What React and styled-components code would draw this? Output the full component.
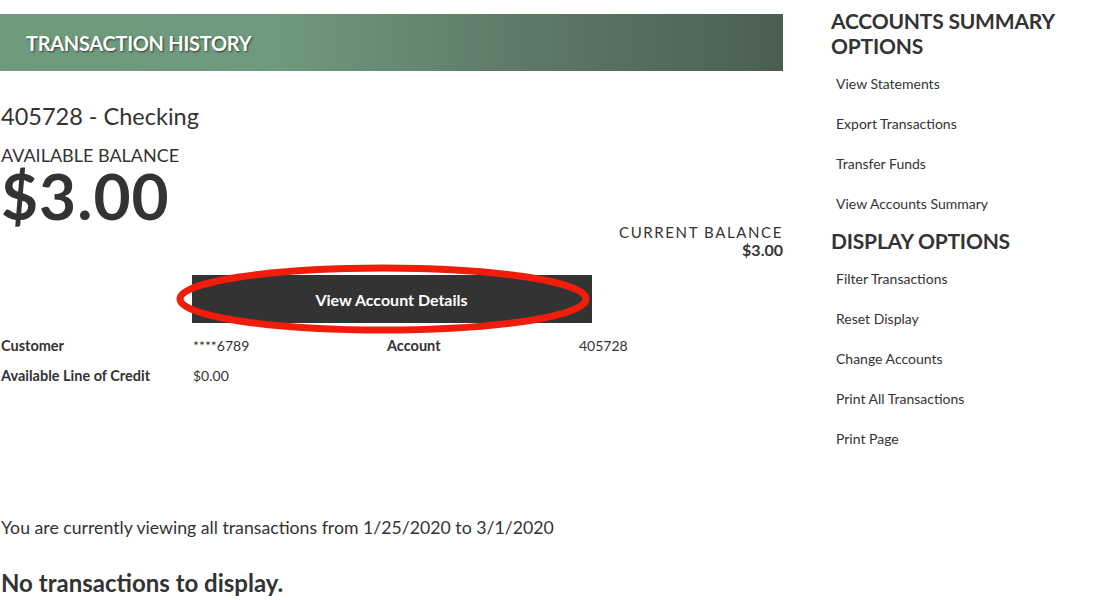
import React from "react";
import styled, {createGlobalStyle} from "styled-components";

const Global = createGlobalStyle`
   body {
      margin: 0;
      font-family: Lato, "Open Sans", sans-serif;
      color: #333;
      background: #fff;
   }
`;
const Page = styled.div`
   width: 1100px;
   display: flex;
   align-items: flex-start;
   gap: 48px;
`;
const Main = styled.main`
   width: 783px;
   padding-top: 14px;
`;
const Banner = styled.div`
   height: 57px;
   display: flex;
   align-items: center;
   padding-left: 26px;
   background: linear-gradient(90deg, #6e9b7c 0%, #6f9a7e 35%, #5f7b67 65%, #4b5f51 100%);
`;
const BannerTitle = styled.h1`
   margin: 0;
   font-size: 20px;
   font-weight: 700;
   color: #fff;
   letter-spacing: -0.3px;
   text-shadow: 1px 1px 2px rgba(0, 0, 0, 0.6);
`;
const AccountName = styled.h2`
   margin: 30px 0 0 1px;
   font-size: 23.5px;
   font-weight: 400;
   line-height: 30px;
`;
const Label = styled.div`
   margin-top: 15px;
   font-size: 18px;
   line-height: 18px;
   padding-left: 1px;
`;
const BigAmount = styled.div`
   font-size: 64px;
   font-weight: 700;
   line-height: 64px;
   letter-spacing: 1px;
   padding-left: 1px;
`;
const Current = styled.div`
   text-align: right;
   margin-top: -5px;
`;
const CurrentLabel = styled.div`
   font-size: 15px;
   letter-spacing: 1.6px;
   line-height: 18px;
`;
const CurrentValue = styled.div`
   font-size: 16px;
   font-weight: 700;
   line-height: 18px;
`;
const ButtonRow = styled.div`
   display: flex;
   justify-content: center;
   margin-top: 16px;
`;
const ButtonWrap = styled.div`
   position: relative;
`;
const DetailsButton = styled.button`
   width: 400px;
   height: 48px;
   border: none;
   background: #333;
   color: #fff;
   font-family: Lato, sans-serif;
   font-size: 16px;
   font-weight: 700;
   cursor: pointer;
`;
const Circle = styled.svg`
   position: absolute;
   left: -18px;
   top: -12px;
   pointer-events: none;
`;
const Details = styled.div`
   display: grid;
   grid-template-columns: 193px 193px 193px 193px;
   row-gap: 12px;
   margin-top: 14px;
   font-size: 14px;
   line-height: 18px;
`;
const Key = styled.div`
   font-weight: 700;
   font-size: 14.5px;
   padding-left: 1px;
`;
const Value = styled.div``;
const Viewing = styled.p`
   margin: 133px 0 0;
   font-size: 17.7px;
   line-height: 20px;
   padding-left: 1px;
`;
const Empty = styled.h3`
   margin: 32px 0 0;
   font-size: 24px;
   font-weight: 700;
   line-height: 26px;
   padding-left: 1px;
`;
const Side = styled.aside`
   width: 260px;
   padding-top: 8px;
`;
const SideTitle = styled.h2`
   margin: 0 0 6px;
   font-size: 21px;
   font-weight: 700;
   line-height: 25px;
   letter-spacing: -0.2px;
`;
const SideList = styled.ul`
   list-style: none;
   margin: 0 0 4px;
   padding: 0 0 0 5px;
`;
const SideItem = styled.li`
   font-size: 14px;
   line-height: 40px;
   cursor: pointer;
`;

const summary = ["View Statements", "Export Transactions", "Transfer Funds", "View Accounts Summary"];
const display = ["Filter Transactions", "Reset Display", "Change Accounts", "Print All Transactions", "Print Page"];

const App = () => {
   return (
      <>
         <Global />
         <Page>
            <Main>
               <Banner>
                  <BannerTitle>TRANSACTION HISTORY</BannerTitle>
               </Banner>
               <AccountName>405728 - Checking</AccountName>
               <Label>AVAILABLE BALANCE</Label>
               <BigAmount>$3.00</BigAmount>
               <Current>
                  <CurrentLabel>CURRENT BALANCE</CurrentLabel>
                  <CurrentValue>$3.00</CurrentValue>
               </Current>
               <ButtonRow>
                  <ButtonWrap>
                     <DetailsButton>View Account Details</DetailsButton>
                     <Circle width="420" height="72" viewBox="0 0 420 72">
                        <ellipse cx="209" cy="36" rx="203" ry="31" fill="none" stroke="#f01d0a" strokeWidth="7" />
                     </Circle>
                  </ButtonWrap>
               </ButtonRow>
               <Details>
                  <Key>Customer</Key>
                  <Value>****6789</Value>
                  <Key>Account</Key>
                  <Value>405728</Value>
                  <Key>Available Line of Credit</Key>
                  <Value>$0.00</Value>
               </Details>
               <Viewing>You are currently viewing all transactions from 1/25/2020 to 3/1/2020</Viewing>
               <Empty>No transactions to display.</Empty>
            </Main>
            <Side>
               <SideTitle>ACCOUNTS SUMMARY OPTIONS</SideTitle>
               <SideList>
                  {summary.map((el) => (
                     <SideItem key={el}>{el}</SideItem>
                  ))}
               </SideList>
               <SideTitle>DISPLAY OPTIONS</SideTitle>
               <SideList>
                  {display.map((el) => (
                     <SideItem key={el}>{el}</SideItem>
                  ))}
               </SideList>
            </Side>
         </Page>
      </>
   );
};

export default App;
